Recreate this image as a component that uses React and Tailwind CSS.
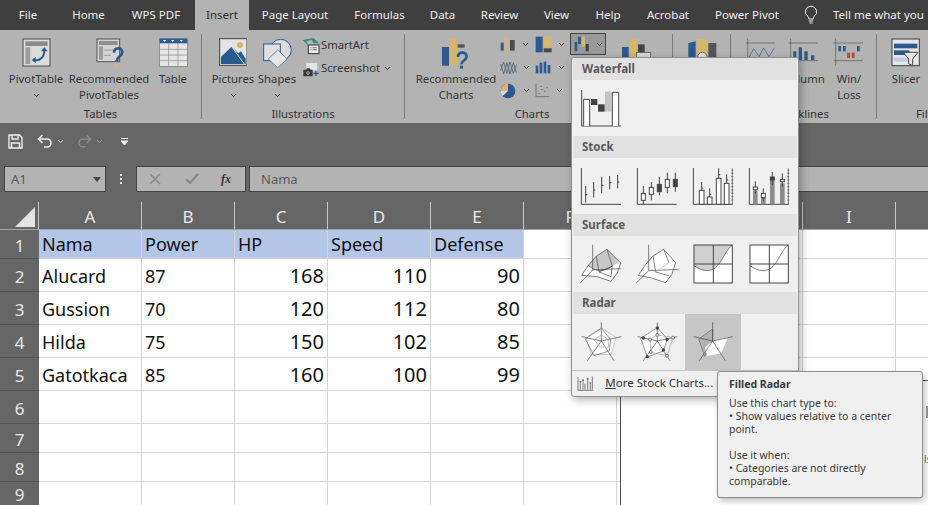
import React from 'react';

// all icons are drawn in the coordinates of a 3x crop, so 3 units = 1px
const Ico = ({ x, y, w, h, children }) => (
    <svg viewBox={`${x} ${y} ${w} ${h}`} width={w / 3} height={h / 3} className="block shrink-0" fill="none">
        {children}
    </svg>
);

const BLUE = '#2b5a8e';
const GOLD = '#d6b56c';
const DARK = '#444444';

const Chevron = ({ className = '' }) => (
    <svg width="7" height="5" viewBox="0 0 7 5" className={`block shrink-0 ${className}`} fill="none">
        <path d="M1 1l2.5 2.5L6 1" stroke="#333" strokeWidth="1" />
    </svg>
);

const PivotTableIcon = () => (
    <Ico x={65} y={112} w={87} h={87}>
        <rect x="68" y="115" width="81" height="81" fill="#dcdcdc" stroke="#4a4a4a" strokeWidth="3" />
        <rect x="75" y="122" width="67" height="14" fill="#8b8b8b" />
        <rect x="75" y="140" width="15" height="50" fill="#9c9c9c" />
        <path d="M101 178c18 5 32-10 31-32" stroke={BLUE} strokeWidth="6" />
        <path d="M122 152l10-12 10 12zM106 168l-12 10 12 10z" fill={BLUE} />
    </Ico>
);

const RecPivotIcon = () => (
    <Ico x={290} y={116} w={88} h={90}>
        <rect x="293" y="119" width="68" height="68" fill="#d4d4d4" stroke="#555" strokeWidth="3" />
        <rect x="299" y="125" width="56" height="12" fill="#8e8e8e" />
        <rect x="299" y="141" width="12" height="40" fill="#9c9c9c" />
        <path d="M315 152h26M315 168h20" stroke="#9a9a9a" strokeWidth="3" />
        <path d="M344 160c0-16 24-18 25-2 0 13-17 13-17 28" stroke={BLUE} strokeWidth="8" />
        <rect x="348" y="192" width="9" height="10" fill={GOLD} />
    </Ico>
);

const TableIcon = () => (
    <Ico x={476} y={112} w={87} h={87}>
        <rect x="478" y="114" width="83" height="83" fill="#e6e6e6" stroke="#777" strokeWidth="2" />
        <rect x="478" y="114" width="83" height="14" fill={BLUE} />
        <path d="M488 118h10l-5 6zM512 118h10l-5 6zM538 118h10l-5 6z" fill="#eee" />
        <path d="M478 146h83M478 163h83M478 180h83M505 128v69M533 128v69" stroke="#8a8a8a" strokeWidth="2" />
    </Ico>
);

const PicturesIcon = () => (
    <Ico x={656} y={114} w={86} h={84}>
        <rect x="658" y="116" width="82" height="80" fill="#e4e4e4" stroke="#3f3f3f" strokeWidth="3" />
        <circle cx="719" cy="135" r="9" fill={GOLD} />
        <path d="M662 192v-22l32-30 20 20 8-6 14 22v16z" fill={BLUE} />
        <path d="M694 140l38 52" stroke="#e4e4e4" strokeWidth="3" />
    </Ico>
);

const ShapesIcon = () => (
    <Ico x={786} y={108} w={92} h={92}>
        <circle cx="842" cy="144" r="32" fill="#dcdcdc" stroke={BLUE} strokeWidth="3" />
        <rect x="791" y="126" width="50" height="50" fill="#e0e0e0" stroke={BLUE} strokeWidth="3" />
        <path d="M833 144l29 27-29 26-28-26z" fill="#e6e6e6" stroke={BLUE} strokeWidth="2" />
    </Ico>
);

const SmartArtIcon = () => (
    <Ico x={33} y={15} w={54} h={54}>
        <path d="M35 24l32-6 18 16H68l-6-10-16 4 6 14z" fill="#3f8a7a" />
        <rect x="52" y="39" width="32" height="26" fill="#e6e6e6" stroke="#333" strokeWidth="3" />
        <path d="M58 47h3M58 53h3M65 47h12M65 53h12" stroke="#333" strokeWidth="2" />
    </Ico>
);

const ScreenshotIcon = () => (
    <Ico x={33} y={88} w={54} h={48}>
        <rect x="46" y="94" width="32" height="22" fill="#e6e6e6" stroke="#ddd" strokeWidth="2" strokeDasharray="4 2" />
        <path d="M37 114h8l3-4h8l3 4h6v20H37z" fill="#3a3a3a" />
        <circle cx="51" cy="124" r="4" stroke="#ddd" strokeWidth="2" />
        <path d="M75 117v16M67 125h16" stroke={BLUE} strokeWidth="4" />
    </Ico>
);

const RecChartsIcon = () => (
    <Ico x={128} y={113} w={88} h={94}>
        <rect x="131" y="140" width="21" height="56" fill={BLUE} />
        <rect x="154" y="116" width="22" height="80" fill={GOLD} />
        <rect x="178" y="132" width="21" height="10" fill="#555" />
        <path d="M179 170c0-16 25-18 26-2 0 13-16 13-16 24" stroke={BLUE} strokeWidth="8" />
        <rect x="185" y="196" width="9" height="9" fill={BLUE} />
    </Ico>
);

const SmallColumnIcon = () => (
    <Ico x={304} y={113} w={48} h={44}>
        <rect x="306" y="130" width="9" height="24" fill={BLUE} />
        <rect x="319" y="116" width="10" height="38" fill={GOLD} />
        <rect x="334" y="122" width="14" height="32" fill="#4b4b4b" />
    </Ico>
);

const SmallHierarchyIcon = () => (
    <Ico x={408} y={106} w={52} h={52}>
        <rect x="410" y="108" width="21" height="47" fill={BLUE} />
        <rect x="434" y="108" width="24" height="33" fill={GOLD} />
        <rect x="434" y="143" width="24" height="12" fill="#4b4b4b" />
    </Ico>
);

const SmallWaterfallIcon = () => (
    <Ico x={518} y={108} w={48} h={48}>
        <rect x="520" y="126" width="8" height="28" fill={BLUE} />
        <rect x="530" y="110" width="9" height="22" fill={BLUE} />
        <rect x="541" y="110" width="10" height="30" fill={GOLD} />
        <rect x="553" y="132" width="9" height="22" fill="#3f3f3f" />
    </Ico>
);

const SmallLineIcon = () => (
    <Ico x={301} y={178} w={52} h={48}>
        <path d="M303 190l9 30 10-34 9 34 10-34 9 30" stroke="#4b4b4b" strokeWidth="2" />
        <path d="M303 210l9-26 10 34 9-34 10 34 9-26" stroke={BLUE} strokeWidth="2" />
    </Ico>
);

const SmallStatIcon = () => (
    <Ico x={408} y={185} w={50} h={40}>
        <rect x="410" y="199" width="8" height="23" fill={BLUE} />
        <rect x="422" y="190" width="8" height="32" fill={BLUE} />
        <rect x="434" y="187" width="8" height="35" fill={BLUE} />
        <rect x="446" y="197" width="8" height="25" fill={BLUE} />
    </Ico>
);

const SmallPieIcon = () => (
    <Ico x={301} y={246} w={50} h={48}>
        <circle cx="325" cy="270" r="22" fill={BLUE} />
        <path d="M325 270v-22a22 22 0 0 0-22 22z" fill={GOLD} />
        <path d="M325 270h-22a22 22 0 0 0 6 15z" fill="#dcdcdc" />
    </Ico>
);

const SmallScatterIcon = () => (
    <Ico x={413} y={248} w={46} h={44}>
        <path d="M416 250v39h40" stroke="#555" strokeWidth="2" />
        <path d="M424 280h3M432 268h3M441 274h3M430 258h3M448 262h3" stroke={BLUE} strokeWidth="3" />
        <path d="M436 254h3M424 268h3" stroke={GOLD} strokeWidth="3" />
    </Ico>
);

const PivotChartIcon = () => (
    <Ico x={660} y={113} w={92} h={58}>
        <rect x="663" y="140" width="20" height="30" fill={BLUE} />
        <rect x="687" y="116" width="22" height="54" fill={GOLD} />
        <rect x="711" y="132" width="20" height="24" fill="#444" />
        <rect x="707" y="157" width="42" height="14" fill="#d8d8d8" stroke="#444" strokeWidth="2" />
    </Ico>
);

const MapIcon = () => (
    <Ico x={858} y={113} w={92} h={58}>
        <path d="M862 128l22-5v48h-22z" fill={BLUE} />
        <rect x="888" y="116" width="30" height="54" fill={GOLD} />
        <path d="M922 128h24v42h-24z" fill="#555" />
        <circle cx="904" cy="170" r="14" fill="#e0e0e0" stroke="#444" strokeWidth="2" />
    </Ico>
);

const LineSparkIcon = () => (
    <Ico x={1032} y={112} w={94} h={82}>
        <path d="M1040 114v76M1034 127h88M1034 180h88" stroke="#555" strokeWidth="2" />
        <path d="M1044 170l14-26 16 24 14-26 16 26 16-26" stroke={BLUE} strokeWidth="2" />
    </Ico>
);

const ColumnSparkIcon = () => (
    <Ico x={1166} y={112} w={94} h={82}>
        <path d="M1174 114v76M1168 127h88M1168 180h88" stroke="#555" strokeWidth="2" />
        <rect x="1182" y="152" width="9" height="26" fill={BLUE} />
        <rect x="1198" y="140" width="10" height="38" fill={BLUE} />
        <rect x="1215" y="152" width="10" height="26" fill={BLUE} />
        <rect x="1235" y="164" width="10" height="14" fill={BLUE} />
    </Ico>
);

const WinLossIcon = () => (
    <Ico x={1300} y={112} w={94} h={84}>
        <path d="M1308 114v80M1302 127h88M1302 180h88" stroke="#555" strokeWidth="2" />
        <rect x="1316" y="136" width="8" height="16" fill={BLUE} />
        <rect x="1330" y="136" width="8" height="16" fill={BLUE} />
        <rect x="1342" y="156" width="9" height="16" fill="#b5503a" />
        <rect x="1356" y="156" width="9" height="16" fill="#b5503a" />
        <rect x="1372" y="136" width="8" height="16" fill={BLUE} />
    </Ico>
);

const SlicerIcon = () => (
    <Ico x={1475} y={113} w={88} h={86}>
        <rect x="1478" y="116" width="82" height="80" fill="#e6e6e6" stroke="#3f3f3f" strokeWidth="3" />
        <rect x="1484" y="130" width="70" height="14" fill={BLUE} />
        <rect x="1484" y="150" width="46" height="14" fill={BLUE} />
        <rect x="1484" y="172" width="46" height="12" fill="#c4cce0" />
        <path d="M1512 156h44l-16 20v20l-12-6v-14z" fill="#e6e6e6" stroke="#444" strokeWidth="3" />
    </Ico>
);

// popup gallery icons
const WaterfallGallery = () => (
    <Ico x={30} y={102} w={126} h={116}>
        <path d="M35 105v108h118" stroke={DARK} strokeWidth="3" />
        <path d="M41 213v-80h18v80M127 213v-101h19v101" fill="#fff" stroke={DARK} strokeWidth="3" />
        <rect x="63" y="132" width="19" height="18" fill={DARK} />
        <rect x="84" y="148" width="20" height="22" fill={DARK} />
        <rect x="105" y="110" width="20" height="60" fill="#c4c4c4" />
    </Ico>
);

const Hlc = ({ x, top, bottom, tick }) => (
    <>
        <path d={`M${x} ${top}V${bottom}`} stroke={DARK} strokeWidth="3" />
        <path d={`M${x} ${tick}h5`} stroke={DARK} strokeWidth="3" />
    </>
);

const Candle = ({ x, top, bottom, y1, y2, dark }) => (
    <>
        <path d={`M${x} ${top}V${bottom}`} stroke={DARK} strokeWidth="3" />
        <rect x={x - 6} y={y1} width="12" height={y2 - y1} fill={dark ? DARK : '#fff'} stroke={DARK} strokeWidth="3" />
    </>
);

const AxisTicks = ({ x }) => (
    <path
        d={`M${x} 337v108M${x - 3} 342h6M${x - 3} 352h6M${x - 3} 362h6M${x - 3} 372h6M${x - 3} 382h6M${x - 3} 392h6M${x - 3} 402h6M${x - 3} 412h6M${x - 3} 422h6M${x - 3} 432h6`}
        stroke={DARK}
        strokeWidth="2"
    />
);

const Stock1 = () => (
    <Ico x={30} y={333} w={126} h={114}>
        <path d="M34 336v109h119" stroke={DARK} strokeWidth="3" />
        <Hlc x={47} top={390} bottom={440} tick={416} />
        <Hlc x={71} top={378} bottom={425} tick={402} />
        <Hlc x={95} top={362} bottom={412} tick={388} />
        <Hlc x={119} top={360} bottom={400} tick={380} />
        <Hlc x={143} top={357} bottom={397} tick={378} />
    </Ico>
);

const Stock2 = () => (
    <Ico x={198} y={333} w={126} h={114}>
        <path d="M202 336v109h118" stroke={DARK} strokeWidth="3" />
        <Candle x={220} top={390} bottom={445} y1={412} y2={433} />
        <Candle x={244} top={378} bottom={433} y1={394} y2={415} />
        <Candle x={268} top={363} bottom={418} y1={385} y2={407} dark />
        <Candle x={292} top={350} bottom={412} y1={370} y2={394} />
        <Candle x={316} top={350} bottom={407} y1={370} y2={392} dark />
    </Ico>
);

const Stock3 = () => (
    <Ico x={366} y={333} w={126} h={114}>
        <path d="M370 336v109h118" stroke={DARK} strokeWidth="3" />
        <AxisTicks x={487} />
        <rect x="388" y="403" width="14" height="42" fill="#fff" stroke={DARK} strokeWidth="3" />
        <rect x="412" y="423" width="14" height="22" fill="#fff" stroke={DARK} strokeWidth="3" />
        <rect x="439" y="367" width="14" height="78" fill="#fff" stroke={DARK} strokeWidth="3" />
        <rect x="463" y="382" width="14" height="63" fill="#fff" stroke={DARK} strokeWidth="3" />
        <Hlc x={395} top={378} bottom={403} tick={396} />
        <Hlc x={419} top={397} bottom={423} tick={415} />
        <Hlc x={446} top={337} bottom={367} tick={356} />
        <Hlc x={470} top={355} bottom={382} tick={372} />
    </Ico>
);

const Stock4 = () => (
    <Ico x={534} y={333} w={126} h={114}>
        <path d="M538 336v109h118" stroke={DARK} strokeWidth="3" />
        <AxisTicks x={655} />
        <rect x="549" y="404" width="14" height="41" fill="#8c8c8c" />
        <rect x="573" y="422" width="14" height="23" fill="#8c8c8c" />
        <rect x="600" y="368" width="14" height="77" fill="#8c8c8c" />
        <rect x="630" y="382" width="14" height="63" fill="#8c8c8c" />
        <Candle x={556} top={376} bottom={412} y1={393} y2={401} />
        <Candle x={580} top={397} bottom={435} y1={412} y2={425} />
        <Candle x={607} top={348} bottom={387} y1={363} y2={372} dark />
        <Candle x={637} top={352} bottom={392} y1={370} y2={377} />
    </Ico>
);

const Surface1 = () => (
    <Ico x={26} y={86} w={134} h={120}>
        <path d="M34 180l20-30 72 2 26-12-12 32-18 24-42-14z" fill="#fff" />
        <path d="M54 150l24-28 32-20 36 38-20 12c-22 18-52 18-72-2z" fill="#c8c8c8" />
        <path d="M67 88v76M30 203l37-39 84-4" stroke={DARK} strokeWidth="2" />
        <path d="M34 180l20-30 24-28 32-20 40 40h2l-12 32-18 24-42-14zM78 122l8 48 36 14M110 102l16 50-4 32M86 170l40-18M54 150c20 20 50 20 72 2" stroke={DARK} strokeWidth="2" />
    </Ico>
);

const Surface2 = () => (
    <Ico x={194} y={86} w={134} h={120}>
        <path d="M204 180l20-30 24-28 32-20 36 40-12 36-18 24-42-14z" fill="#fff" />
        <path d="M235 88v78M198 203l37-37 90-4" stroke={DARK} strokeWidth="2" />
        <path d="M204 180l20-30 24-28 32-20 36 40-12 36-18 24-42-14zM248 122l8 48 42 12M280 102l16 40" stroke={DARK} strokeWidth="2" />
        <path d="M224 150l32 20 40-28" stroke="#bbb" strokeWidth="2" />
    </Ico>
);

const Contour = ({ x, fillTop }) => (
    <Ico x={x - 3} y={85} w={122} h={120}>
        <rect x={x} y="88" width="115" height="114" fill="#fff" />
        {fillTop && (
            <path d={`M${x} 88h115c-28 22-36 78-75 77-18 0-32-8-40-14z`} fill="#cfcfcf" />
        )}
        <path d={`M${x} 149c12 10 26 16 40 16 39 1 47-55 75-77`} stroke={DARK} strokeWidth="2" />
        <rect x={x} y="88" width="115" height="114" stroke={DARK} strokeWidth="3" />
        <path d={`M${x + 58} 88v114M${x} 145h115`} stroke={DARK} strokeWidth="3" />
    </Ico>
);

const Radar1 = () => (
    <Ico x={28} y={318} w={128} h={124}>
        <path d="M92 338l44 30-14 50-60 0-16-50z" fill="#fff" stroke="#b0b0b0" strokeWidth="2" />
        <path d="M92 322v56M152 365l-60 13M130 437l-38-59M50 437l42-59M33 365l59 13" stroke={DARK} strokeWidth="2" />
        <path d="M92 340l28 34-4 34-46 14-26-50z" stroke="#666" strokeWidth="2" />
        <path d="M92 360l20 12 2 24-26 0-18-22z" stroke="#a8a8a8" strokeWidth="2" />
    </Ico>
);

const Radar2 = () => (
    <Ico x={198} y={318} w={128} h={124}>
        <path d="M262 338l30 34-12 36-48 18-20-56z" fill="#fff" stroke="#666" strokeWidth="2" />
        <path d="M262 322v56M322 365l-60 13M300 437l-38-59M220 437l42-59M203 365l59 13" stroke={DARK} strokeWidth="2" />
        <path d="M262 360l46 8-16 54-50-10-2-38z" stroke="#999" strokeWidth="2" />
        <circle cx="262" cy="339" r="5" fill={DARK} />
        <circle cx="291" cy="373" r="5" fill={DARK} />
        <circle cx="280" cy="405" r="5" fill={DARK} />
        <circle cx="232" cy="425" r="5" fill={DARK} />
        <circle cx="220" cy="369" r="5" fill={DARK} />
        <circle cx="262" cy="360" r="4.5" fill="#fff" stroke={DARK} strokeWidth="2" />
        <circle cx="309" cy="368" r="4.5" fill="#fff" stroke={DARK} strokeWidth="2" />
        <circle cx="291" cy="422" r="4.5" fill="#fff" stroke={DARK} strokeWidth="2" />
        <circle cx="242" cy="411" r="4.5" fill="#fff" stroke={DARK} strokeWidth="2" />
        <circle cx="240" cy="374" r="4.5" fill="#fff" stroke={DARK} strokeWidth="2" />
    </Ico>
);

const Radar3 = () => (
    <Ico x={368} y={318} w={128} h={124}>
        <path d="M430 342l-42 30 18 52 24-46z" fill="#b2b2b2" stroke="#666" strokeWidth="2" />
        <path d="M430 378l46-12-20 50-42 6-8-24 24-20z" fill="#fff" />
        <path d="M430 322v56M490 365l-60 13M468 437l-38-59M390 437l40-59M373 365l57 13" stroke={DARK} strokeWidth="2" />
    </Ico>
);

const MoreChartsIcon = () => (
    <Ico x={18} y={478} w={52} h={48}>
        <path d="M21 484v40h46" stroke={DARK} strokeWidth="2" />
        <path d="M28 498v24M36 490v32M42 504v18M50 486v36M58 500v22M64 482v40" stroke={DARK} strokeWidth="2" />
        <path d="M25 498h6M33 494h6M47 490h6M55 502h6" stroke={DARK} strokeWidth="2" />
    </Ico>
);

const BulbIcon = () => (
    <svg width="14" height="20" viewBox="0 0 14 20" className="block shrink-0" fill="none">
        <path d="M7 1.2a5.6 5.6 0 0 0-3.2 10.2c.8.7 1 1.5 1 2.6h4.4c0-1.1.2-1.9 1-2.6A5.6 5.6 0 0 0 7 1.2z" stroke="#eee" strokeWidth="1" />
        <path d="M4.8 16h4.4M5.5 18h3" stroke="#eee" strokeWidth="1" />
    </svg>
);

const tabs = [
    { label: 'File', cls: 'w-[56px]' },
    { label: 'Home', cls: 'w-[65px]' },
    { label: 'WPS PDF', cls: 'w-[70px]' },
    { label: 'Insert', cls: 'w-[54px] ml-[4px] bg-[#b3b3b3] text-[#2e2e2e]' },
    { label: 'Page Layout', cls: 'w-[92px]' },
    { label: 'Formulas', cls: 'w-[77px]' },
    { label: 'Data', cls: 'w-[49px]' },
    { label: 'Review', cls: 'w-[65px]' },
    { label: 'View', cls: 'w-[49px]' },
    { label: 'Help', cls: 'w-[54px]' },
    { label: 'Acrobat', cls: 'w-[66px]' },
    { label: 'Power Pivot', cls: 'w-[92px]' },
];

const LargeButton = ({ className, icon, label, second, chevron }) => (
    <div className={`flex flex-col items-center shrink-0 ${className}`}>
        <div className="h-[34px] pt-px flex justify-center">{icon}</div>
        <span className="leading-[16px] whitespace-nowrap">{label}</span>
        {second && <span className="leading-[16px] whitespace-nowrap">{second}</span>}
        {chevron && <div className="h-[16px] flex items-center"><Chevron /></div>}
    </div>
);

const Group = ({ className, labelClass = '', label, children }) => (
    <div className={`relative h-full shrink-0 flex flex-col ${className}`}>
        <div className="flex-1 flex items-start pt-[7px] min-h-0">{children}</div>
        <div className={`h-[17px] leading-[16px] text-center whitespace-nowrap ${labelClass}`}>{label}</div>
    </div>
);

const Sep = () => <div className="w-px my-[4px] bg-[#7a7a7a] shrink-0" />;

const SmallChart = ({ icon, className = '' }) => (
    <div className={`h-[23px] w-[35px] flex items-center gap-[6px] shrink-0 ${className}`}>
        {icon}
        <Chevron />
    </div>
);

const Ribbon = () => (
    <div className="h-[93px] bg-[#b3b3b3] flex text-[11.3px] text-[#333333]">
        <Group className="w-[201px]" label="Tables">
            <LargeButton className="w-[72px]" icon={<PivotTableIcon />} label="PivotTable" chevron />
            <LargeButton className="w-[74px]" icon={<div className="ml-[4px]"><RecPivotIcon /></div>} label="Recommended" second="PivotTables" />
            <LargeButton className="w-[54px]" icon={<TableIcon />} label="Table" />
        </Group>
        <Sep />
        <Group className="w-[202px]" label="Illustrations">
            <LargeButton className="w-[48px] ml-[7px]" icon={<PicturesIcon />} label="Pictures" chevron />
            <LargeButton className="w-[40px]" icon={<ShapesIcon />} label="Shapes" chevron />
            <div className="ml-[5px] -mt-[1px] flex flex-col gap-[4px]">
                <div className="flex items-center gap-[1px] h-[19px]">
                    <SmartArtIcon />
                    <span>SmartArt</span>
                </div>
                <div className="flex items-center gap-[1px] h-[19px]">
                    <ScreenshotIcon />
                    <span>Screenshot</span>
                    <Chevron className="ml-[3px]" />
                </div>
            </div>
        </Group>
        <Sep />
        <Group className="w-[267px]" labelClass="pr-[13px]" label="Charts">
            <LargeButton className="w-[84px] ml-[9px]" icon={<RecChartsIcon />} label="Recommended" second="Charts" />
            <div className="-mt-[4px] ml-[2px] grid grid-cols-[35px_35px_36px] shrink-0">
                <SmallChart icon={<SmallColumnIcon />} />
                <SmallChart icon={<SmallHierarchyIcon />} />
                <div className="h-[22px] flex items-center gap-[6px] pl-[3px] bg-[#999999] border border-[#444444]">
                    <SmallWaterfallIcon />
                    <Chevron />
                </div>
                <SmallChart icon={<SmallLineIcon />} />
                <SmallChart icon={<SmallStatIcon />} />
                <div />
                <SmallChart icon={<SmallPieIcon />} />
                <SmallChart icon={<SmallScatterIcon />} />
            </div>
            <div className="ml-[15px] mt-[1px]">
                <PivotChartIcon />
            </div>
        </Group>
        <Sep />
        <Group className="w-[57px]" label="Tours">
            <div className="ml-[14px] mt-[1px]">
                <MapIcon />
            </div>
        </Group>
        <Sep />
        <Group className="w-[145px]" labelClass="pr-[4px]" label="Sparklines">
            <LargeButton className="w-[44px] ml-[8px]" icon={<LineSparkIcon />} label="Line" />
            <LargeButton className="w-[42px]" icon={<ColumnSparkIcon />} label="Column" />
            <LargeButton className="w-[48px]" icon={<WinLossIcon />} label="Win/" second="Loss" />
        </Group>
        <Sep />
        <Group className="w-[110px]" label="Filters">
            <LargeButton className="w-[50px] ml-[4px]" icon={<SlicerIcon />} label="Slicer" />
        </Group>
    </div>
);

const QuickAccess = () => (
    <div className="h-[37px] bg-[#666666] flex items-center pl-[8px]">
        <svg width="15" height="15" viewBox="0 0 15 15" fill="none" className="block shrink-0">
            <path d="M1 1h10.5L14 3.5V14H1z" stroke="#eee" strokeWidth="1.4" />
            <path d="M4 1v4h6V1M3.5 14V9h8v5" stroke="#eee" strokeWidth="1.4" />
        </svg>
        <svg width="16" height="15" viewBox="0 0 16 15" fill="none" className="block shrink-0 ml-[14px]">
            <path d="M2 5h8a4 4 0 0 1 0 8H7" stroke="#eee" strokeWidth="1.6" />
            <path d="M5.5 1L1.5 5l4 4" stroke="#eee" strokeWidth="1.6" />
        </svg>
        <Chevron className="ml-[4px] invert" />
        <svg width="15" height="15" viewBox="0 0 16 15" fill="none" className="block shrink-0 ml-[13px]">
            <path d="M14 5H6a4 4 0 0 0 0 8h3" stroke="#8c8c8c" strokeWidth="1.6" />
            <path d="M10.5 1l4 4-4 4" stroke="#8c8c8c" strokeWidth="1.6" />
        </svg>
        <Chevron className="ml-[4px] opacity-40 invert" />
        <svg width="7" height="8" viewBox="0 0 7 8" className="block shrink-0 ml-[18px]">
            <path d="M0 0.5h7M0 3h7l-3.5 4z" stroke="#eee" strokeWidth="1" fill="#eee" />
        </svg>
    </div>
);

const FormulaBar = () => (
    <div className="h-[42px] bg-[#666666] pt-[6px] pb-[10px] flex text-[13px] text-[#5a5a5a]">
        <div className="ml-[4px] w-[102px] bg-[#b3b3b3] border border-[#444444] flex items-center justify-between pl-[6px] pr-[4px]">
            <span className="pt-px">A1</span>
            <svg width="8" height="5" viewBox="0 0 8 5" className="block"><path d="M0 0h8L4 5z" fill="#444" /></svg>
        </div>
        <div className="w-[30px] flex flex-col items-center justify-center gap-[2px]">
            <i className="w-[2px] h-[2px] bg-[#eee]" />
            <i className="w-[2px] h-[2px] bg-[#eee]" />
            <i className="w-[2px] h-[2px] bg-[#eee]" />
        </div>
        <div className="w-[110px] bg-[#b3b3b3] border border-[#444444] flex items-center">
            <svg width="12" height="12" viewBox="0 0 12 12" className="block ml-[12px]" fill="none">
                <path d="M1 1l10 10M11 1L1 11" stroke="#888" strokeWidth="1.6" />
            </svg>
            <svg width="14" height="12" viewBox="0 0 14 12" className="block ml-[24px]" fill="none">
                <path d="M1 6l4 4 8-9" stroke="#888" strokeWidth="2.2" />
            </svg>
            <span className="ml-[22px] text-[#333333] italic font-bold text-[12px] [font-family:'Liberation_Serif',serif]">fx</span>
        </div>
        <div className="ml-[3px] flex-1 bg-[#b3b3b3] border-y border-l border-[#444444] flex items-center pl-[11px] pt-px">Nama</div>
    </div>
);

const COLS = ['A', 'B', 'C', 'D', 'E', 'F', 'G', 'H', 'I'];
const ROWS = [
    { n: 1, h: 'h-[29px]', head: true, cells: ['Nama', 'Power', 'HP', 'Speed', 'Defense'] },
    { n: 2, h: 'h-[33px]', cells: ['Alucard', '87', 168, 110, 90] },
    { n: 3, h: 'h-[33px]', cells: ['Gussion', '70', 120, 112, 80] },
    { n: 4, h: 'h-[33px]', cells: ['Hilda', '75', 150, 102, 85] },
    { n: 5, h: 'h-[33px]', cells: ['Gatotkaca', '85', 160, 100, 99] },
    { n: 6, h: 'h-[33px]', cells: [] },
    { n: 7, h: 'h-[29px]', cells: [] },
    { n: 8, h: 'h-[29px]', cells: [] },
    { n: 9, h: 'h-[24px]', cells: [] },
];
const GRID = 'grid grid-cols-[39px_103px_93px_93px_103px_93px_93px_93px_93px_93px_32px]';

const cellPad = (isNum, head) => {
    if (isNum) return 'justify-end pr-[3px] pt-px text-[20px]';
    return head ? 'pl-[3px] pt-px' : 'pl-[3px] pt-[3px]';
};

const Sheet = () => (
    <div className="text-[18px] text-[#111111]">
        <div className={`${GRID} h-[28px] bg-[#666666] border-b border-[#a3a3a3] text-[#e8e8e8] text-[17px]`}>
            <div className="relative border-r border-[#c8c8c8]">
                <svg width="21" height="20" viewBox="0 0 21 20" className="absolute left-[15px] top-[5px]">
                    <path d="M0 20L20 0v20z" fill="#e4e4e4" />
                </svg>
            </div>
            {COLS.map((c) => (
                <div key={c} className="flex items-center justify-center border-r border-[#c8c8c8] leading-none pt-px">{c}</div>
            ))}
            <div />
        </div>
        {ROWS.map((r) => (
            <div key={r.n} className={`${GRID} ${r.h} grid-rows-[100%]`}>
                <div className="bg-[#666666] border-b border-[#525252] flex items-center justify-center text-[#e8e8e8] text-[17px] leading-none pt-[2px]">{r.n}</div>
                {COLS.map((c, i) => {
                    const v = r.cells[i];
                    const isNum = typeof v === 'number';
                    return (
                        <div
                            key={c}
                            className={`flex items-center border-r border-b border-[#d4d4d4] whitespace-nowrap ${r.head && i < 5 ? 'bg-[#b4c6e7]' : 'bg-white'} ${cellPad(isNum, r.head)}`}
                        >
                            {v}
                        </div>
                    );
                })}
                <div className="bg-white border-b border-[#d4d4d4]" />
                <div className="bg-white border-b border-[#d4d4d4]" />
            </div>
        ))}
    </div>
);

const PopupHead = ({ children }) => (
    <div className="h-[22px] mx-[1px] bg-[#e1e1e1] flex items-center pl-[9px] text-[11.5px] font-bold text-[#595959]">{children}</div>
);

const Cell = ({ children, selected }) => (
    <div className={`w-[56px] h-[56px] flex items-center justify-center ${selected ? 'bg-[#c6c6c6]' : ''}`}>{children}</div>
);

const ChartMenu = () => (
    <div className="absolute left-[571px] top-[57px] w-[228px] h-[340px] bg-[#f0f0f0] border border-[#8f8f8f] rounded-[3px] shadow-[2px_3px_8px_rgba(0,0,0,0.3)] flex flex-col">
        <PopupHead>Waterfall</PopupHead>
        <div className="flex pl-[1px]"><Cell><WaterfallGallery /></Cell></div>
        <PopupHead>Stock</PopupHead>
        <div className="flex pl-[1px]">
            <Cell><Stock1 /></Cell>
            <Cell><Stock2 /></Cell>
            <Cell><Stock3 /></Cell>
            <Cell><Stock4 /></Cell>
        </div>
        <PopupHead>Surface</PopupHead>
        <div className="flex pl-[1px]">
            <Cell><Surface1 /></Cell>
            <Cell><Surface2 /></Cell>
            <Cell><Contour x={370} fillTop /></Cell>
            <Cell><Contour x={538} /></Cell>
        </div>
        <PopupHead>Radar</PopupHead>
        <div className="flex pl-[1px]">
            <Cell><Radar1 /></Cell>
            <Cell><Radar2 /></Cell>
            <Cell selected><Radar3 /></Cell>
        </div>
        <div className="flex-1 border-t border-[#c4c4c4] flex items-center pl-[5px] pb-[2px] text-[11.5px] text-[#333333]">
            <MoreChartsIcon />
            <span className="ml-[11px] whitespace-nowrap"><span className="underline">M</span>ore Stock Charts...</span>
        </div>
    </div>
);

const Tip = () => (
    <div className="absolute left-[717px] top-[371px] w-[206px] h-[127px] bg-[#f0f0f0] border border-[#8f8f8f] rounded-[3px] shadow-[2px_3px_6px_rgba(0,0,0,0.25)] px-[11px] pt-[6px] text-[10.5px] leading-[13px] text-[#3a3a3a]">
        <p className="font-bold h-[19px]">Filled Radar</p>
        <p>Use this chart type to:</p>
        <p>• Show values relative to a center point.</p>
        <p className="mt-[13px]">Use it when:</p>
        <p>• Categories are not directly comparable.</p>
    </div>
);

export default function App() {
    return (
        <div className="relative w-[928px] h-[505px] overflow-hidden bg-white font-['Noto_Sans',sans-serif]">
            <div className="h-[30px] bg-[#3f3f3f] flex text-[11.5px] text-[#ededed] whitespace-nowrap overflow-hidden">
                {tabs.map((t) => (
                    <div key={t.label} className={`flex items-center justify-center shrink-0 ${t.cls}`}>{t.label}</div>
                ))}
                <div className="ml-[11px] flex items-center gap-[15px] shrink-0">
                    <BulbIcon />
                    <span>Tell me what you</span>
                </div>
            </div>
            <Ribbon />
            <QuickAccess />
            <FormulaBar />
            <Sheet />

            {/* chart object sitting on the sheet, mostly hidden by the menu */}
            <div className="absolute left-[620px] top-[380px] w-[340px] h-[160px] bg-white border border-[#555555]">
                <i className="absolute left-[305px] top-[25px] w-[2px] h-[12px] bg-[#999999]" />
                <span className="absolute left-[303px] top-[72px] text-[10px] leading-[12px] text-[#777777]">ls</span>
            </div>
            <ChartMenu />
            <Tip />
        </div>
    );
}
